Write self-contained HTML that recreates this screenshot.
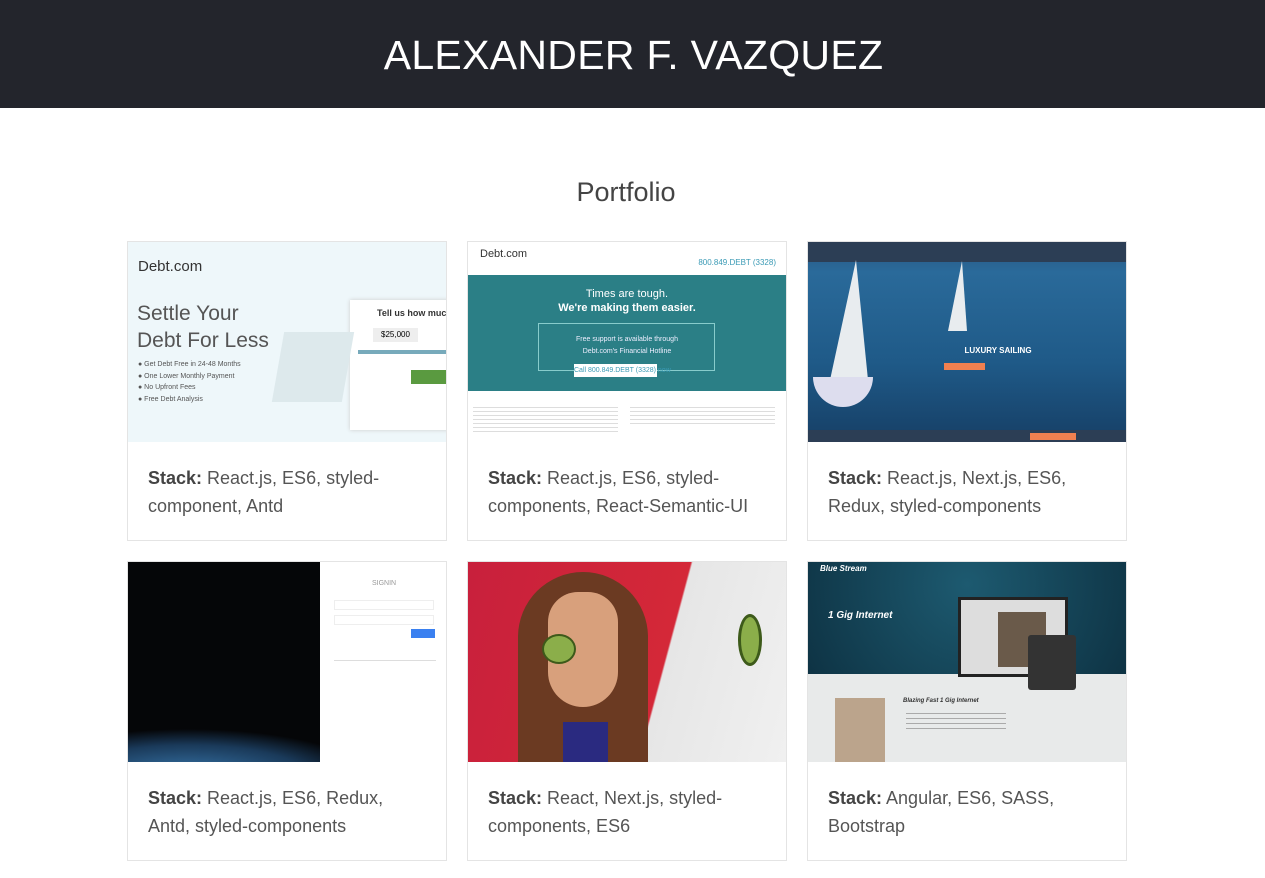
<!DOCTYPE html>
<html><head><meta charset="utf-8"><style>
*{margin:0;padding:0;box-sizing:border-box}
body{width:1265px;height:878px;overflow:hidden;background:#fff;font-family:"Liberation Sans",sans-serif}
header{height:108px;background:#23252c;color:#fff;text-align:center}
header h1{font-size:41px;font-weight:normal;line-height:110px;letter-spacing:0.3px;padding-left:2px}
h2{font-size:27px;font-weight:normal;color:#444;text-align:center;position:absolute;top:177px;left:0;width:1252px}
.card{position:absolute;width:320px;height:300px;border:1px solid #e4e4e4;background:#fff;overflow:hidden}
.img{position:absolute;left:0;top:0;width:318px;height:200px;overflow:hidden}
.txt{position:absolute;left:20px;top:222px;width:280px;font-size:18px;line-height:28px;color:#555}
.txt b{color:#444}
.a{position:absolute;white-space:nowrap}
</style></head><body>
<header><h1>ALEXANDER F. VAZQUEZ</h1></header>
<h2>Portfolio</h2>

<div class="card" style="left:127px;top:241px"><div class="img" style="background:#eef7fa">
<div class="a" style="left:10px;top:16px;font-size:15px;color:#333">Debt.com</div>
<div class="a" style="left:9px;top:58px;font-size:21px;color:#555;line-height:27px">Settle Your<br>Debt For Less</div>
<div class="a" style="left:10px;top:117px;font-size:7px;color:#555;line-height:11.5px">● Get Debt Free in 24-48 Months<br>● One Lower Monthly Payment<br>● No Upfront Fees<br>● Free Debt Analysis</div>
<div class="a" style="left:222px;top:58px;width:100px;height:130px;background:#fff;box-shadow:0 0 4px #ccc"></div>
<div class="a" style="left:249px;top:66px;font-size:9px;font-weight:bold;color:#333">Tell us how much</div>
<div class="a" style="left:245px;top:86px;width:45px;height:14px;background:#eee;font-size:8px;text-align:center;line-height:14px">$25,000</div>
<div class="a" style="left:230px;top:108px;width:90px;height:4px;background:#7ab"></div>
<div class="a" style="left:283px;top:128px;width:35px;height:14px;background:#5a9a40"></div>
<div class="a" style="left:150px;top:90px;width:70px;height:70px;background:#dde9ec;transform:skew(-10deg)"></div>
</div><div class="txt"><b>Stack:</b> React.js, ES6, styled-component, Antd</div></div>

<div class="card" style="left:467px;top:241px"><div class="img" style="background:#fff">
<div class="a" style="left:12px;top:6px;font-size:11px;color:#333">Debt.com</div>
<div class="a" style="right:10px;top:16px;font-size:8px;color:#3a9ab5">800.849.DEBT (3328)</div>
<div class="a" style="left:0;top:33px;width:318px;height:116px;background:#2b7f86"></div>
<div class="a" style="left:0;top:45px;width:318px;text-align:center;color:#fff;font-size:11px;line-height:14px">Times are tough.<br><b>We're making them easier.</b></div>
<div class="a" style="left:70px;top:81px;width:177px;height:48px;border:1px solid #8cc"></div>
<div class="a" style="left:0;top:92px;width:318px;text-align:center;color:#eef;font-size:7px;line-height:12px">Free support is available through<br>Debt.com's Financial Hotline</div>
<div class="a" style="left:106px;top:122px;width:83px;height:13px;background:#fff;font-size:7px;color:#3a9ab5;text-align:center;line-height:13px">Call 800.849.DEBT (3328) now</div>
<div class="a" style="left:5px;top:162px;width:145px;height:30px;background:repeating-linear-gradient(#fff 0 3px,#ddd 3px 4px)"></div>
<div class="a" style="left:162px;top:162px;width:145px;height:20px;background:repeating-linear-gradient(#fff 0 3px,#ddd 3px 4px)"></div>
</div><div class="txt"><b>Stack:</b> React.js, ES6, styled-components, React-Semantic-UI</div></div>

<div class="card" style="left:807px;top:241px"><div class="img" style="background:linear-gradient(#2a5580 0,#2a6a9a 15%,#1f5a88 60%,#163f66 100%)">
<div class="a" style="left:0;top:0;width:318px;height:20px;background:#2c3e55"></div>
<div class="a" style="left:0;top:188px;width:318px;height:12px;background:#2c3e55"></div>
<div class="a" style="left:222px;top:191px;width:46px;height:7px;background:#f08050"></div>
<div class="a" style="left:0;top:104px;width:318px;text-align:center;color:#fff;font-size:8px;font-weight:bold;padding-left:62px">LUXURY SAILING</div>
<div class="a" style="left:136px;top:121px;width:41px;height:7px;background:#f08050"></div>
<div class="a" style="left:22px;top:18px;width:0;height:0;border-left:26px solid transparent;border-right:12px solid transparent;border-bottom:120px solid #e8ecef"></div>
<div class="a" style="left:5px;top:135px;width:60px;height:30px;background:#dde;border-radius:0 0 30px 30px"></div>
<div class="a" style="left:140px;top:19px;width:0;height:0;border-left:14px solid transparent;border-right:5px solid transparent;border-bottom:70px solid #e8ecef"></div>
</div><div class="txt"><b>Stack:</b> React.js, Next.js, ES6, Redux, styled-components</div></div>

<div class="card" style="left:127px;top:561px"><div class="img" style="background:#fff">
<div class="a" style="left:0;top:0;width:192px;height:200px;background:radial-gradient(ellipse 300px 80px at 60px 215px,#3a7ab0 0,#1a3a5a 40%,#050608 60%),#050608"></div>
<div class="a" style="left:192px;top:0;width:126px;height:200px;background:#fff"></div>
<div class="a" style="left:244px;top:18px;font-size:7px;color:#999">SIGNIN</div>
<div class="a" style="left:206px;top:38px;width:100px;height:10px;border:1px solid #eee"></div>
<div class="a" style="left:206px;top:53px;width:100px;height:10px;border:1px solid #eee"></div>
<div class="a" style="left:283px;top:67px;width:24px;height:9px;background:#3a80f0"></div>
<div class="a" style="left:206px;top:98px;width:102px;height:1px;background:#ddd"></div>
</div><div class="txt"><b>Stack:</b> React.js, ES6, Redux, Antd, styled-components</div></div>

<div class="card" style="left:467px;top:561px"><div class="img" style="background:linear-gradient(105deg,#c8203c 0,#d42838 60%,#e6e6e6 60.5%,#f0f0f0 100%)">
<div class="a" style="left:50px;top:10px;width:130px;height:200px;background:#6b3a22;border-radius:65px 65px 0 0"></div>
<div class="a" style="left:80px;top:30px;width:70px;height:115px;background:#d8a07c;border-radius:30px 30px 35px 35px"></div>
<div class="a" style="left:95px;top:160px;width:45px;height:40px;background:#2a2a80"></div>
<div class="a" style="left:74px;top:72px;width:34px;height:30px;background:#8bae4a;border-radius:50%;border:2px solid #3d5a1a"></div>
<div class="a" style="left:270px;top:52px;width:24px;height:52px;background:#8bae4a;border-radius:50%;border:3px solid #3d5a1a"></div>
</div><div class="txt"><b>Stack:</b> React, Next.js, styled-components, ES6</div></div>

<div class="card" style="left:807px;top:561px"><div class="img" style="background:#e8eaea">
<div class="a" style="left:0;top:0;width:318px;height:112px;background:radial-gradient(circle at 50% 20%,#1d5a70,#0e3344)"></div>
<div class="a" style="left:12px;top:2px;font-size:8px;font-style:italic;font-weight:bold;color:#fff">Blue Stream</div>
<div class="a" style="left:20px;top:48px;font-size:10px;font-style:italic;font-weight:bold;color:#fff">1 Gig Internet</div>
<div class="a" style="left:150px;top:35px;width:110px;height:80px;background:#ddd;border:3px solid #222"></div>
<div class="a" style="left:190px;top:50px;width:48px;height:55px;background:#6a5a4a"></div>
<div class="a" style="left:220px;top:73px;width:48px;height:55px;background:#333;border-radius:3px"></div>
<div class="a" style="left:27px;top:136px;width:50px;height:64px;background:#bba48c"></div>
<div class="a" style="left:95px;top:136px;font-size:6px;font-style:italic;font-weight:bold;color:#333">Blazing Fast 1 Gig Internet</div>
<div class="a" style="left:98px;top:147px;width:100px;height:24px;background:repeating-linear-gradient(#e8eaea 0 4px,#aaa 4px 5px)"></div>
</div><div class="txt"><b>Stack:</b> Angular, ES6, SASS, Bootstrap</div></div>
</body></html>
